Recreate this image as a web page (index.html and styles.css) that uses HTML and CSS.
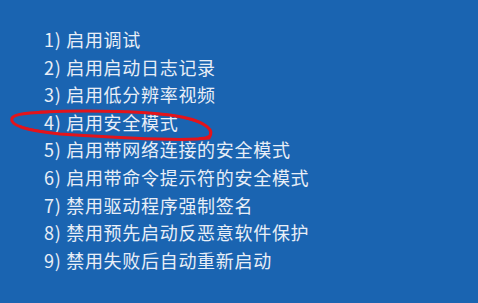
FILE: index.html
```html
<!DOCTYPE html>
<html lang="zh-CN">
<head>
<meta charset="utf-8">
<link rel="stylesheet" href="styles.css">
</head>
<body>
<div class="screen">
  <ol class="options">
    <li>1) 启用调试</li>
    <li>2) 启用启动日志记录</li>
    <li>3) 启用低分辨率视频</li>
    <li>4) 启用安全模式</li>
    <li>5) 启用带网络连接的安全模式</li>
    <li>6) 启用带命令提示符的安全模式</li>
    <li>7) 禁用驱动程序强制签名</li>
    <li>8) 禁用预先启动反恶意软件保护</li>
    <li>9) 禁用失败后自动重新启动</li>
  </ol>
  <svg class="mark" width="478" height="303" viewBox="0 0 478 303">
    <path d="M40 112 C90 110 150 111 182 117 C206 122 215 130 209 138 C190 141 120 138 60 134 C35 131 15 128 12 121 C10 115 20 113 48 112" fill="none" stroke="#e3141b" stroke-width="3" stroke-linecap="round"/>
    <path d="M150 113 C180 115 205 121 211 131 C212 135 208 138 200 138" fill="none" stroke="#e3141b" stroke-width="2" stroke-linecap="round"/>
    <path d="M20 126 C28 130 38 131 52 133" fill="none" stroke="#e3141b" stroke-width="2" stroke-linecap="round"/>
  </svg>
</div>
</body>
</html>
```
FILE: styles.css
```css
html, body {
  margin: 0;
  padding: 0;
}
body {
  background: #1a64b1;
}
.screen {
  position: relative;
  width: 478px;
  height: 303px;
  overflow: hidden;
  background: #1a64b1;
}
.options {
  list-style: none;
  margin: 0;
  padding: 26px 0 0 44px;
  font-family: "Noto Sans CJK SC", "Noto Sans", sans-serif;
  font-size: 18px;
  line-height: 27.6px;
  letter-spacing: 0.7px;
  color: #e8eef7;
}
.mark {
  position: absolute;
  left: 0;
  top: 0;
  pointer-events: none;
}
```
